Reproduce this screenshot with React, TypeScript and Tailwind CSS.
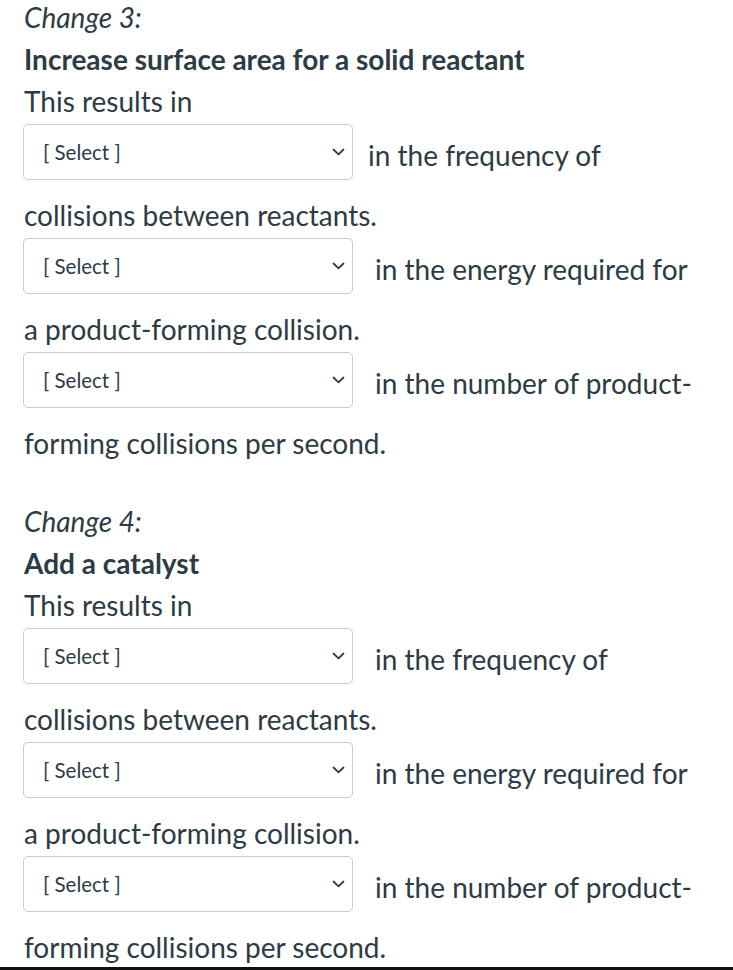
import React from "react";

const font = { fontFamily: "Lato, 'Open Sans', sans-serif" };

function Dropdown() {
  return (
    <div className="relative -ml-[1px] flex h-[56px] w-[330px] shrink-0 items-center rounded-[5px] border border-[#c7cdd1] bg-white pl-[19px] text-[20.5px] leading-none text-[#2d3b45]">
      <span>[ Select ]</span>
      <svg
        className="absolute right-[7px] top-1/2 -translate-y-1/2"
        width="13"
        height="8"
        viewBox="0 0 13 8"
        fill="none"
      >
        <path d="M1.5 1.5 L6.5 6.3 L11.5 1.5" stroke="#2d3b45" strokeWidth="1.8" strokeLinecap="round" strokeLinejoin="round" />
      </svg>
    </div>
  );
}

function DropRow({ text, tight }: { text: string; tight?: boolean }) {
  return (
    <div className="mt-[2px] mb-[14px] flex items-start">
      <Dropdown />
      <span className={`${tight ? "ml-[15px]" : "ml-[22px]"} mt-[10px] whitespace-nowrap`}>{text}</span>
    </div>
  );
}

function Change({ label, title, tightFirst }: { label: string; title: string; tightFirst?: boolean }) {
  return (
    <div>
      <p className="italic">{label}</p>
      <p className="font-bold">{title}</p>
      <p>This results in</p>
      <DropRow text="in the frequency of" tight={tightFirst} />
      <p>collisions between reactants.</p>
      <DropRow text="in the energy required for" />
      <p>a product-forming collision.</p>
      <DropRow text="in the number of product-" />
      <p>forming collisions per second.</p>
    </div>
  );
}

export default function App() {
  return (
    <div className="h-[970px] w-[733px] overflow-hidden bg-white">
      <div
        className="-mt-[4px] pl-[24px] text-[28px] leading-[42px] text-[#2d3b45]"
        style={font}
      >
        <Change label="Change 3:" title="Increase surface area for a solid reactant" tightFirst />
        <div className="h-[36px]" />
        <Change label="Change 4:" title="Add a catalyst" />
      </div>
      <div className="-mt-[1px] h-[3px] w-full bg-[#111]" />
    </div>
  );
}
